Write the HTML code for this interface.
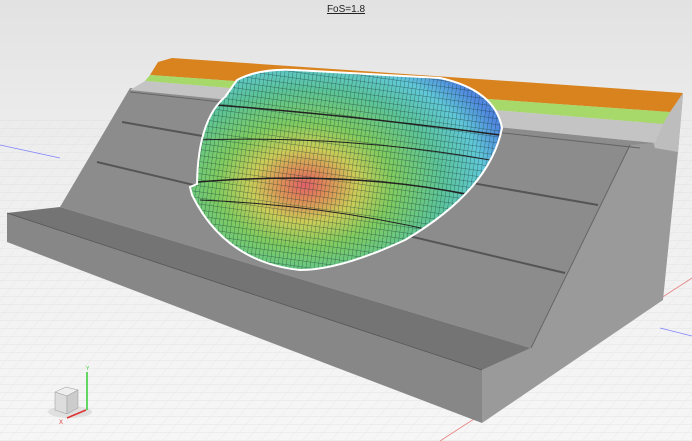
<!DOCTYPE html>
<html><head><style>
html,body{margin:0;padding:0;width:692px;height:441px;overflow:hidden;background:#f1f1f1;}
.t{position:absolute;top:4px;left:0;width:692px;text-align:center;font:10px "Liberation Sans",sans-serif;color:#222;text-decoration:underline;}
</style></head><body>
<svg width="692" height="441" style="position:absolute;left:0;top:0">
<defs>
<linearGradient id="bg" x1="0" y1="0" x2="0" y2="1"><stop offset="0" stop-color="#e2e2e2"/><stop offset="0.35" stop-color="#eeeeee"/><stop offset="1" stop-color="#f6f6f6"/></linearGradient>
<pattern id="grid" width="14" height="8" patternUnits="userSpaceOnUse" patternTransform="skewX(-40)"><path d="M0 0H14M0 0V8" stroke="#dcdcdc" stroke-width="0.7" fill="none"/></pattern>
<radialGradient id="slip" cx="305" cy="185" r="210" gradientUnits="userSpaceOnUse" gradientTransform="translate(305 185) scale(1 0.7) translate(-305 -185)">
<stop offset="0" stop-color="#e06068"/><stop offset="0.1" stop-color="#e08a58"/><stop offset="0.25" stop-color="#cccc58"/><stop offset="0.42" stop-color="#80cc60"/><stop offset="0.65" stop-color="#5cc498"/><stop offset="0.85" stop-color="#60c8d8"/><stop offset="1" stop-color="#5088e0"/></radialGradient>
<pattern id="mesh" width="4" height="6" patternUnits="userSpaceOnUse" patternTransform="rotate(8)"><path d="M0 0H4M0 0V6" stroke="#10302a" stroke-width="0.7" fill="none" opacity="0.75"/></pattern>
<clipPath id="sc"><path id="sp" d="M225,97 L237,80 Q260,68 295,70 L440,78 Q495,90 502,128 Q490,190 405,240 Q340,270 300,270 Q225,262 192,195 L190,187 L197,184 Q198,120 225,97Z"/></clipPath>
</defs>
<rect width="692" height="441" fill="url(#bg)"/>
<rect y="120" width="692" height="321" fill="url(#grid)" opacity="0.8"/>
<line x1="0" y1="145" x2="60" y2="158" stroke="#8080ff" stroke-width="0.8"/>
<line x1="660" y1="328" x2="692" y2="336" stroke="#8080ff" stroke-width="0.8"/>
<line x1="440" y1="441" x2="692" y2="278" stroke="#e88080" stroke-width="0.8"/>
<polygon points="531,348 630,145 645,115 683,94 678,152 663,300 482,423 482,370" fill="#9a9a9a"/>
<polygon points="645,115 683,94 678,152 655,148" fill="#bdbdbd"/>
<polygon points="60,207 130,88 655,143 630,145 531,348" fill="#8c8c8c"/>
<polygon points="150,75 158,62 172,58 683,93 670,112" fill="#d9831f"/>
<polygon points="150,75 670,112 663,124 145,81" fill="#a6d86a"/>
<polygon points="145,81 663,124 655,143 130,90" fill="#c4c4c4"/>
<line x1="130" y1="92" x2="640" y2="148" stroke="#666" stroke-width="1"/>
<line x1="122" y1="122" x2="598" y2="205" stroke="#555" stroke-width="2"/>
<line x1="97" y1="162" x2="565" y2="273" stroke="#555" stroke-width="2"/>
<line x1="630" y1="145" x2="531" y2="348" stroke="#666" stroke-width="1"/>
<polygon points="7,213 60,207 531,348 482,370" fill="#747474"/>
<polygon points="7,213 482,370 482,423 7,242" fill="#878787"/>
<line x1="7" y1="213" x2="482" y2="370" stroke="#555" stroke-width="0.8"/>
<g clip-path="url(#sc)">
<rect x="180" y="60" width="330" height="220" fill="url(#slip)"/>
<rect x="180" y="60" width="330" height="220" fill="url(#mesh)"/>
<path d="M215,105 Q350,115 500,135" stroke="#222" stroke-width="1.5" fill="none"/>
<path d="M198,182 Q350,170 470,195" stroke="#222" stroke-width="1.5" fill="none"/>
<path d="M195,140 Q350,135 490,160" stroke="#222" stroke-width="1" fill="none"/>
<path d="M200,200 Q320,205 430,230" stroke="#222" stroke-width="1" fill="none"/>
</g>
<use href="#sp" fill="none" stroke="#fff" stroke-width="2"/>
<ellipse cx="70" cy="412" rx="22" ry="6" fill="#e0e0e0"/>
<polygon points="55,392 66,387 78,390 67,396" fill="#eee" stroke="#999" stroke-width="0.5"/>
<polygon points="55,392 67,396 67,414 55,410" fill="#ddd" stroke="#999" stroke-width="0.5"/>
<polygon points="67,396 78,390 78,408 67,414" fill="#ccc" stroke="#999" stroke-width="0.5"/>
<line x1="87" y1="372" x2="87" y2="410" stroke="#3c3" stroke-width="1.5"/>
<line x1="67" y1="418" x2="86" y2="410" stroke="#d33" stroke-width="1.5"/>
<text x="59" y="424" font-family="Liberation Sans" font-size="6" fill="#d33">X</text>
<text x="86" y="370" font-family="Liberation Sans" font-size="5" fill="#3c3">Y</text>
</svg>
<div class="t">FoS=1.8</div>
</body></html>
